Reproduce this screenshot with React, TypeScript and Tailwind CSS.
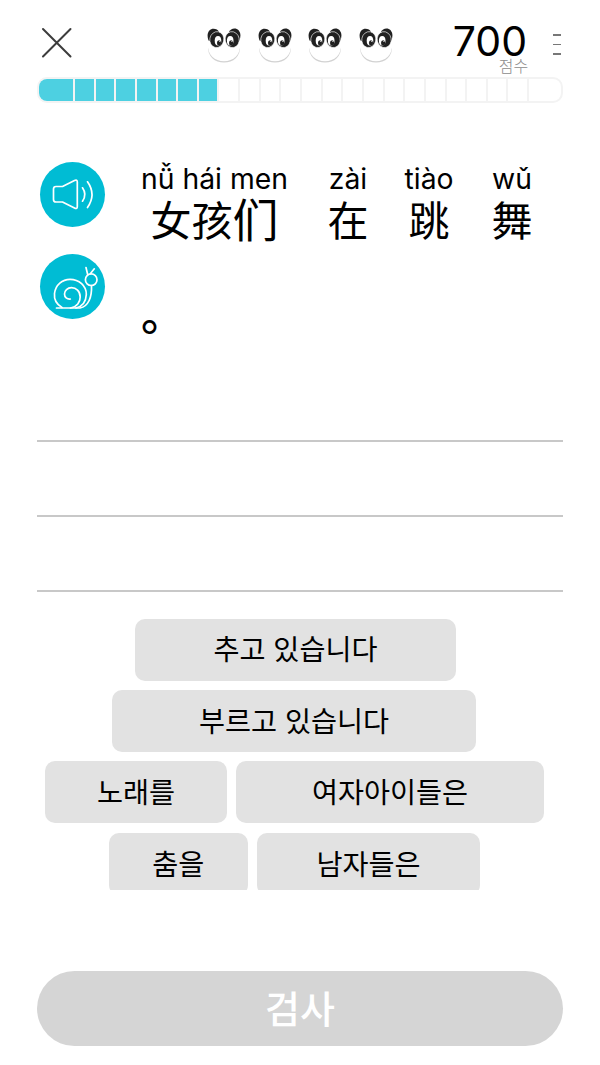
const HANZI = "font-['Inter','Noto_Sans_CJK_SC',sans-serif]";
const KOREAN = "font-['Noto_Sans_CJK_KR',sans-serif]";

function Panda() {
  return (
    <svg className="h-[36px] w-[34px] shrink-0" viewBox="0 0 34 36" fill="none">
      <path d="M1 17C0 29 8 34.600 17 34.600S34 29 33 17Z" fill="#d2d2d2" />
      <path d="M1 15.500C0 27.500 8 33.200 17 33.200S34 27.500 33 15.500Z" fill="#fff" />
      <path d="M1.500 12.500C-1.200 5 2.500 .8 6.500 .8C9 .8 11 2 12 4L3 13Z" fill="#202020" />
      <path d="M32.500 12.500C35.200 4.800 31.500 .4 27.500 .4C25 .4 23 1.800 22 3.600L31 12.600Z" fill="#202020" />
      <ellipse cx="9.800" cy="11.600" rx="7" ry="8" fill="#202020" stroke="#fff" strokeWidth=".6" transform="rotate(12 9.800 11.600)" />
      <ellipse cx="25.200" cy="11.600" rx="7" ry="8" fill="#202020" stroke="#fff" strokeWidth=".6" transform="rotate(-12 25.200 11.600)" />
      <ellipse cx="11" cy="12.700" rx="3.300" ry="4.700" fill="#fff" />
      <ellipse cx="23.200" cy="12.700" rx="3.300" ry="4.700" fill="#fff" />
      <ellipse cx="12" cy="14.900" rx="2.100" ry="2.600" fill="#202020" />
      <ellipse cx="24.100" cy="14.900" rx="2.100" ry="2.600" fill="#202020" />
      <circle cx="12.800" cy="13.500" r=".6" fill="#fff" />
      <circle cx="24.900" cy="13.500" r=".6" fill="#fff" />
    </svg>
  );
}

function Header() {
  return (
    <header className="flex h-[77px] items-start pl-[41px]">
      <svg className="mt-[27px] h-8 w-8 shrink-0" viewBox="0 0 32 32" stroke="#3c3c3c" strokeWidth="2" strokeLinecap="round">
        <path d="M2 2L29.500 29.500M29.500 2L2 29.500" />
      </svg>
      <div className="mt-[28px] ml-[134px] flex gap-[16.600px]">
        <Panda />
        <Panda />
        <Panda />
        <Panda />
      </div>
      <div className="ml-[54px] flex w-[81px] flex-col items-end">
        <span className="mt-[23px] mr-[0.500px] font-['Inter',sans-serif] text-[41px] leading-[36px] font-[380] tracking-[0.100px] text-black">700</span>
        <span className={`${KOREAN} mt-[-3px] mr-[-0.500px] text-[16px] leading-[18px] font-light text-[#8c8c8c]`}>점수</span>
      </div>
      <div className="mt-[34px] ml-[25px] flex flex-col gap-[8px]">
        <i className="h-[1.500px] w-[8px] bg-[#777]" />
        <i className="h-[1.500px] w-[8px] bg-[#777]" />
        <i className="h-[1.500px] w-[8px] bg-[#777]" />
      </div>
    </header>
  );
}

function Progress() {
  const cells = Array.from({ length: 22 }, (_, i) => i);
  return (
    <div className="mx-[37px] flex h-[26px] overflow-hidden rounded-[10px] border-2 border-[#f3f3f3]">
      <div className="w-[36px] shrink-0 border-r-2 border-[#f3f3f3] bg-[#4dd0e1]" />
      {cells.map((i) => (
        <div key={i} className={i < 7 ? "flex-1 border-r-2 border-[#f3f3f3] bg-[#4dd0e1]" : "flex-1 border-r-2 border-[#f3f3f3]"} />
      ))}
      <div className="w-[32px] shrink-0" />
    </div>
  );
}

function SpeakerButton() {
  return (
    <button className="flex h-[65px] w-[65px] rounded-full bg-[#00bcd4]">
      <svg viewBox="0 0 65 65" fill="none" stroke="#fff" strokeWidth="1.700" strokeLinecap="round" strokeLinejoin="round">
        <path d="M16 24.500H22.500L34.500 18.500Q37.300 17.400 37.300 20V44.500Q37.300 47.500 34.500 46L22.500 40H16Q13.500 40 13.500 37.500V27Q13.500 24.500 16 24.500Z" />
        <path d="M42.500 25.800Q47.200 32.500 42.500 39.200M47.500 19.800Q56.500 32.500 47.500 45.500" />
      </svg>
    </button>
  );
}

function SnailButton() {
  return (
    <button className="flex h-[65px] w-[65px] rounded-full bg-[#00bcd4]">
      <svg viewBox="0 0 65 65" fill="none" stroke="#fff" strokeWidth="1.700" strokeLinecap="round" strokeLinejoin="round">
        <circle cx="51.200" cy="25.700" r="5.800" />
        <path d="M47.600 20.300L46 13.500M50.500 19.500L54.300 14.800" />
        <path d="M16.500 54H40C48.500 52.500 52 43 51.500 31.500" />
        <path d="M22 53.500C16 50 14 44.500 14.500 39.500C15.500 30.500 22.500 25.300 30 25.300C39 25.300 46.500 32 46.300 40.500C46 48 42 52.500 36 54M30.500 54C37 53 40.200 48 40.200 43C40.200 37 36 33.700 31.500 33.700C27.500 33.700 24.500 36.500 24.500 40C24.500 43.300 27 45.300 30.300 45" />
      </svg>
    </button>
  );
}

function Word({ pinyin, hanzi, tail, className }: { pinyin: string; hanzi: string; tail?: string; className: string }) {
  return (
    <div className={`flex flex-col items-center whitespace-nowrap text-black ${className}`}>
      <span className="font-['Inter',sans-serif] text-[28.300px] leading-[34px]">{pinyin}</span>
      <span className={`${HANZI} flex text-[41px] leading-[50px]`}>
        {hanzi}
        {tail && <span className="-mt-px text-[46px]">{tail}</span>}
      </span>
    </div>
  );
}

function Tile({ text, className }: { text: string; className: string }) {
  return (
    <button className={`${KOREAN} h-[62px] shrink-0 rounded-[10px] bg-[#e2e2e2] pb-[2px] text-[28.300px] leading-none [word-spacing:1.500px] whitespace-nowrap text-black ${className}`}>
      {text}
    </button>
  );
}

export default function App() {
  return (
    <main className="flex h-[1065px] w-[600px] flex-col overflow-hidden bg-white">
      <Header />
      <Progress />
      <section className="flex h-[337.400px] shrink-0 pt-[59px] pl-[40px]">
        <div className="flex w-[65px] flex-col gap-[27px]">
          <SpeakerButton />
          <SnailButton />
        </div>
        <div className="pl-[36px]">
          <div className="flex h-[109px]">
            <Word pinyin="nǚ hái men" hanzi="女孩" tail="们" className="w-[147px]" />
            <Word pinyin="zài" hanzi="在" className="ml-[40px] w-[40px]" />
            <Word pinyin="tiào" hanzi="跳" className="ml-[36px] w-[50px]" />
            <Word pinyin="wǔ" hanzi="舞" className="ml-[38px] w-[40px]" />
          </div>
          <div className={`${HANZI} mt-[18px] text-[44px] leading-[52px] font-medium text-black`}>。</div>
        </div>
      </section>
      <div className="mx-[37.400px] flex shrink-0 flex-col gap-[73px]">
        <div className="h-[2px] bg-[#c8c8c8]" />
        <div className="h-[2px] bg-[#c8c8c8]" />
        <div className="h-[2px] bg-[#c8c8c8]" />
      </div>
      <section className="mt-[26.200px] flex h-[271.500px] shrink-0 flex-col gap-[9.400px] overflow-hidden">
        <div className="flex pl-[135px]">
          <Tile text="추고 있습니다" className="w-[321px]" />
        </div>
        <div className="flex pl-[112px]">
          <Tile text="부르고 있습니다" className="w-[364px]" />
        </div>
        <div className="flex gap-[9px] pl-[45px]">
          <Tile text="노래를" className="w-[182px]" />
          <Tile text="여자아이들은" className="w-[308px]" />
        </div>
        <div className="flex gap-[9.500px] pl-[109px]">
          <Tile text="춤을" className="w-[138.500px]" />
          <Tile text="남자들은" className="w-[223px]" />
        </div>
      </section>
      <button className={`${KOREAN} mx-[37.400px] mt-[80.900px] h-[75px] shrink-0 rounded-full bg-[#d5d5d5] pb-[3px] text-[38px] leading-none font-medium text-white`}>
        검사
      </button>
    </main>
  );
}
